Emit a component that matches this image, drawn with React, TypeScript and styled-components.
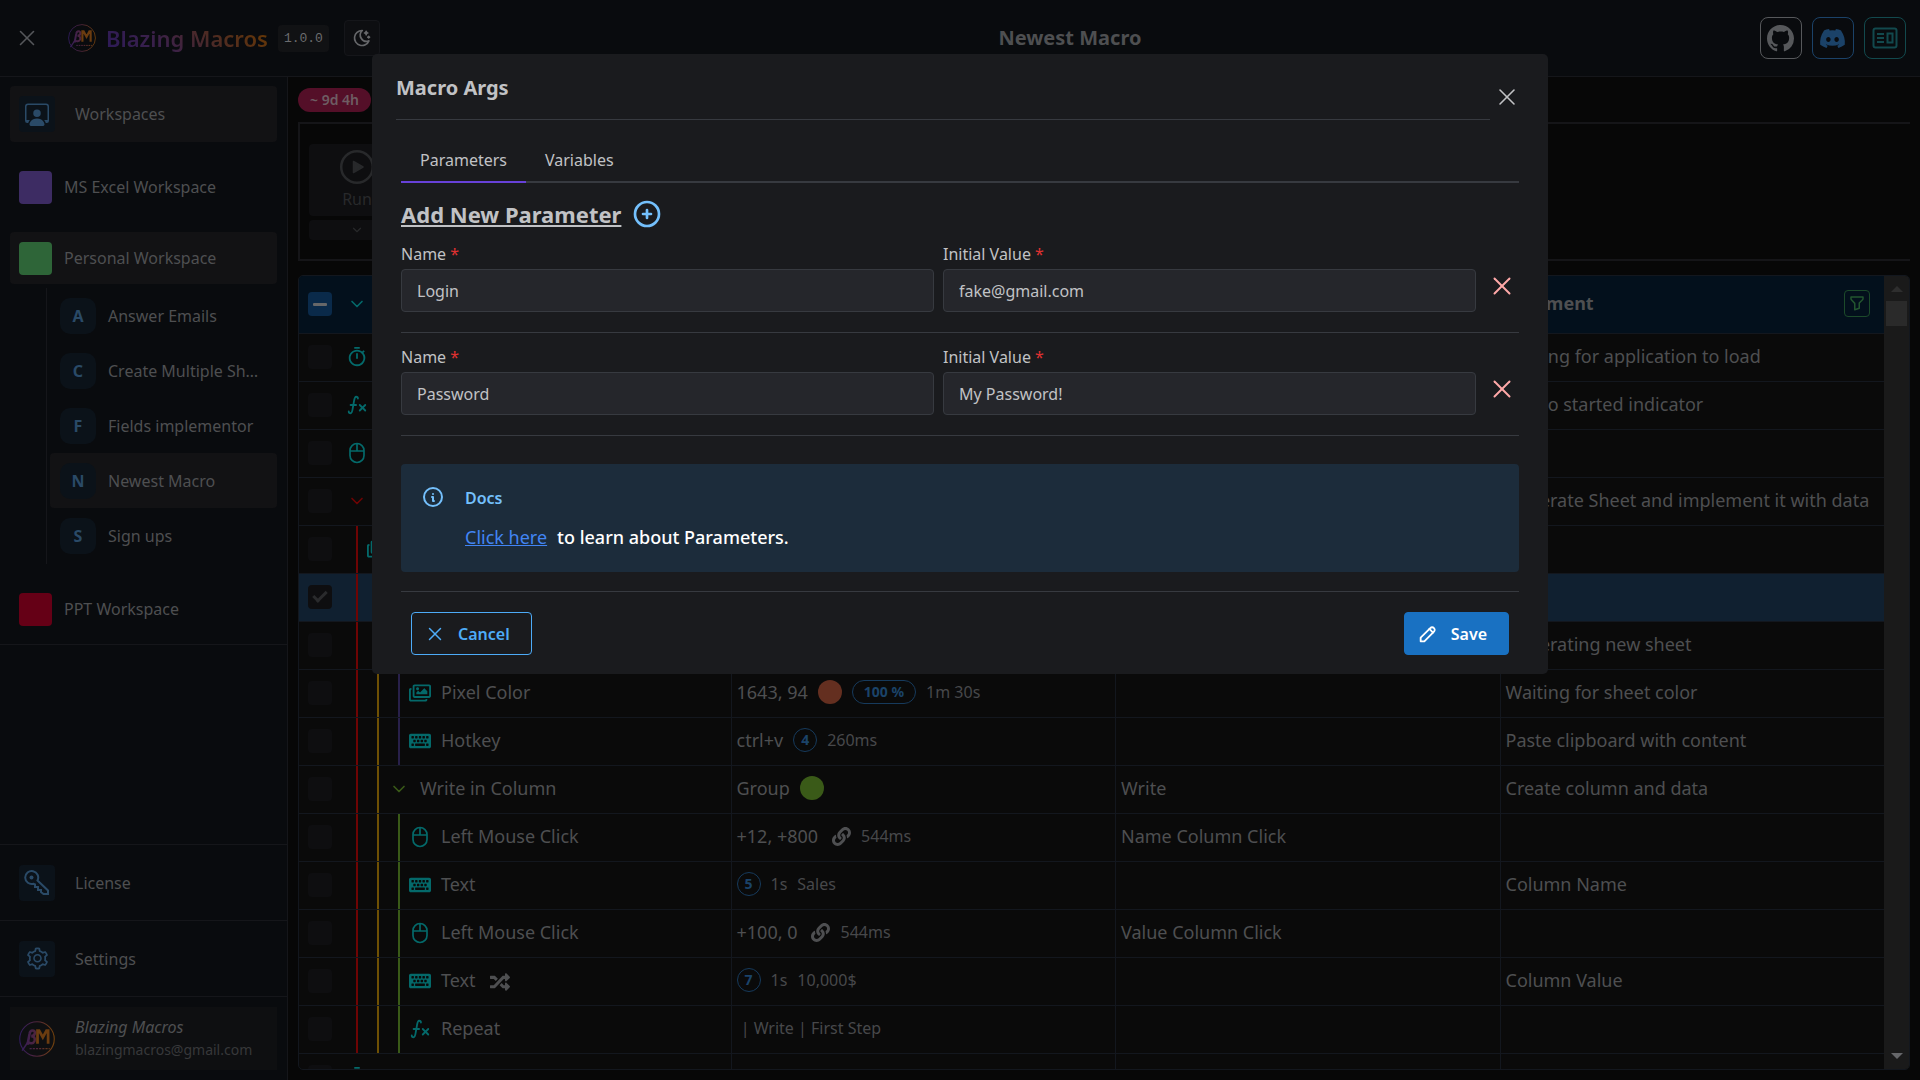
import React from "react";
import styled, { createGlobalStyle, css } from "styled-components";
import {
  BsPersonWorkspace,
  BsGithub,
} from "react-icons/bs";
import { AiOutlineSetting } from "react-icons/ai";
import {
  TbMathFunction,
  TbMoonStars,
  TbFilter,
  TbPencil,
  TbCirclePlus,
  TbInfoCircle,
} from "react-icons/tb";
import { MdOutlineTimer } from "react-icons/md";
import { FaDiscord, FaKeyboard, FaLink, FaRegImages, FaRandom } from "react-icons/fa";
import { X, ChevronDown } from "lucide-react";

const GlobalStyle = createGlobalStyle`
  *, *::before, *::after { box-sizing: border-box; }
  body {
    margin: 0;
    background: #070707;
    color: #4e4f51;
    font-family: "Noto Sans", sans-serif;
    font-size: 16px;
    line-height: 24px;
  }
  button, input { font: inherit; color: inherit; }
  button { cursor: pointer; padding: 0; border: 0; background: none; }
  h1, h2, p, ul { margin: 0; padding: 0; }
  ul { list-style: none; }
  a { color: inherit; text-decoration: none; }
`;

/* ---------- shell ---------- */

const Shell = styled.div`
  display: flex;
  flex-direction: column;
  height: 100vh;
  overflow: hidden;
`;

const Header = styled.header`
  display: flex;
  align-items: center;
  justify-content: space-between;
  height: 77px;
  padding: 0 14px;
  background: #090b0e;
  border-bottom: 1px solid #15161a;
`;

const HeaderLeft = styled.div`
  display: flex;
  align-items: center;
`;

const HeaderRight = styled.div`
  display: flex;
  gap: 10px;
`;

const IconButton = styled.button`
  display: flex;
  align-items: center;
  justify-content: center;
`;

const BurgerClose = styled(IconButton)`
  width: 26px;
  height: 26px;
  margin-right: 28px;
  color: #55575b;
`;

const Brand = styled.span`
  margin: 0 10px;
  font-size: 22px;
  line-height: 30px;
  font-weight: 600;
  background: linear-gradient(45deg, #2c1a5a 0%, #3b2148 35%, #4c2a24 62%, #6b3a00 100%);
  background-clip: text;
  color: transparent;
`;

const Version = styled.code`
  padding: 2px 6px;
  border-radius: 4px;
  background: #111214;
  color: #6b6c6e;
  font-family: "Liberation Mono", monospace;
  font-size: 13px;
  line-height: 23px;
`;

const ThemeToggle = styled(IconButton)`
  width: 36px;
  height: 36px;
  margin-left: 15px;
  border: 1px solid #15161a;
  border-radius: 4px;
  background: #0d0e11;
  color: #66676a;
`;

const PageTitle = styled.h1`
  font-size: 20px;
  line-height: 28px;
  font-weight: 700;
  color: #4e4f51;
`;

const SocialLink = styled.a<{ $color: string }>`
  display: flex;
  align-items: center;
  justify-content: center;
  width: 42px;
  height: 42px;
  border: 1px solid ${(p) => p.$color};
  border-radius: 8px;
  color: ${(p) => p.$color};
`;

const Body = styled.div`
  display: flex;
  flex: 1;
  min-height: 0;
`;

/* ---------- sidebar ---------- */

const Sidebar = styled.aside`
  display: flex;
  flex-direction: column;
  flex: none;
  width: 288px;
  background: #090b0e;
  border-right: 1px solid #15161a;
`;

const WorkspaceNav = styled.nav`
  display: flex;
  flex-direction: column;
  gap: 19px;
  padding: 9px 10px;
  border-bottom: 1px solid #15161a;
`;

const NavItem = styled.a<{ $active?: boolean; $height: number; $gap: number }>`
  display: flex;
  align-items: center;
  gap: ${(p) => p.$gap}px;
  height: ${(p) => p.$height}px;
  padding: 0 9px;
  border-radius: 4px;
  background: ${(p) => (p.$active ? "#121214" : "transparent")};
`;

const IconTile = styled.span<{ $rounded?: boolean }>`
  display: flex;
  align-items: center;
  justify-content: center;
  flex: none;
  width: 36px;
  height: 36px;
  border-radius: ${(p) => (p.$rounded ? 10 : 4)}px;
  background: #0b1219;
  color: #2a4a67;
  font-weight: 700;
`;

const Swatch = styled.span<{ $color: string }>`
  flex: none;
  width: 33px;
  height: 33px;
  border-radius: 4px;
  background: ${(p) => p.$color};
`;

const MacroList = styled.ul`
  margin: 4px 0 0 36px;
  padding: 0 0 1px 3px;
  border-left: 1px solid #15161a;
`;

const MacroItem = styled(NavItem)`
  padding: 0 6px 0 10px;
  white-space: nowrap;
`;

const SidebarFooter = styled.div`
  margin-top: auto;
`;

const FooterRow = styled.div`
  padding: 10px;
  border-top: 1px solid #15161a;
`;

const UserCard = styled.div`
  display: flex;
  align-items: center;
  gap: 20px;
  height: 63px;
  padding: 0 9px;
  background: #0e0f11;
`;

const UserName = styled.div`
  font-style: italic;
  line-height: 23px;
`;

const UserMail = styled.div`
  font-size: 14px;
  line-height: 22px;
  color: #37383a;
`;

/* ---------- main ---------- */

const Main = styled.main`
  display: flex;
  flex-direction: column;
  flex: 1;
  min-width: 0;
  padding: 11px 10px 10px;
`;

const TimeBadge = styled.span`
  align-self: flex-start;
  padding: 0 12px;
  border-radius: 12px;
  background: #540f28;
  color: #6e5d63;
  font-size: 14px;
  line-height: 24px;
  font-weight: 600;
`;

const Toolbar = styled.section`
  height: 139px;
  margin: 10px 0 14px;
  padding: 20px 9px;
  border: 2px solid #151518;
  border-right: 0;
`;

const RunGroup = styled.div`
  display: flex;
  flex-direction: column;
  gap: 4px;
  width: 96px;
  color: #28292b;
`;

const RunButton = styled.button`
  display: flex;
  flex-direction: column;
  align-items: center;
  gap: 2px;
  height: 72px;
  padding-top: 5px;
  border-radius: 4px;
  background: #0e0e10;
`;

const RunMenu = styled(IconButton)`
  height: 20px;
  border-radius: 4px;
  background: #0e0e10;
`;

const TableFrame = styled.section`
  display: flex;
  flex: 1;
  min-height: 0;
  overflow: hidden;
  border: 1px solid #13171e;
  border-radius: 5px;
  background: #0a0a0a;
`;

const TableScroll = styled.div`
  flex: 1;
  min-width: 0;
  overflow: hidden;
`;

const Table = styled.table`
  width: 100%;
  table-layout: fixed;
  border-collapse: separate;
  border-spacing: 0;
  font-size: 18px;
`;

const CheckCol = styled.col`
  width: 47px;
`;

const Row = styled.tr<{ $selected?: boolean }>`
  height: 48px;
  background: ${(p) => (p.$selected ? "#102030" : "transparent")};
`;

const HeadRow = styled.tr`
  height: 58px;
  background: #03101c;
`;

const cellBase = css`
  padding: 0 0 3px 5px;
  border-bottom: 1px solid #13171e;
  text-align: left;
  white-space: nowrap;
  overflow: hidden;
`;

const HeadCell = styled.th`
  ${cellBase}
  padding-left: 6px;
  font-weight: 700;
`;

const Cell = styled.td`
  ${cellBase}
  border-left: 1px solid #13171e;
`;

const CheckCell = styled.td`
  ${cellBase}
  padding: 0 0 1px 9px;
`;

const NameCell = styled.td`
  ${cellBase}
  padding: 0;
`;

const Checkbox = styled.input<{ $tone?: string; $mark?: "dash" | "tick" }>`
  appearance: none;
  display: flex;
  align-items: center;
  justify-content: center;
  width: 24px;
  height: 24px;
  margin: 0;
  border-radius: 4px;
  background: ${(p) => p.$tone || "#0e0e10"};

  ${(p) =>
    p.$mark === "dash" &&
    css`
      &::before {
        content: "";
        width: 14px;
        height: 3px;
        border-radius: 1px;
        background: #666769;
      }
    `}
  ${(p) =>
    p.$mark === "tick" &&
    css`
      &::before {
        content: "";
        width: 14px;
        height: 8px;
        margin-bottom: 4px;
        border: solid #2a2b2d;
        border-width: 0 0 3px 3px;
        transform: rotate(-45deg);
      }
    `}
`;

const NameLine = styled.div`
  display: flex;
  align-items: center;
  height: 47px;
`;

const NameText = styled.span`
  padding-bottom: 3px;
`;

const Guide = styled.span<{ $color: string }>`
  display: flex;
  justify-content: center;
  align-self: stretch;
  flex: none;
  width: 21px;

  &::before {
    content: "";
    width: 2px;
    background: ${(p) => p.$color};
  }
`;

const Glyph = styled.span<{ $color?: string }>`
  display: flex;
  align-items: center;
  justify-content: center;
  flex: none;
  width: 22px;
  margin-right: 10px;
  padding-bottom: 2px;
  color: ${(p) => p.$color || "#04696a"};
`;

const Trailing = styled.span`
  display: flex;
  margin-left: 14px;
`;

const Values = styled.div`
  display: flex;
  align-items: center;
  gap: 10px;
`;

const Small = styled.span`
  font-size: 16px;
  color: #47484a;
`;

const Dot = styled.span<{ $color: string }>`
  width: 24px;
  height: 24px;
  border-radius: 50%;
  background: ${(p) => p.$color};
`;

const Pill = styled.span`
  min-width: 24px;
  padding: 0 11px;
  border: 1px solid #163a5c;
  border-radius: 12px;
  color: #1b4369;
  font-size: 14px;
  line-height: 22px;
  font-weight: 700;
  text-align: center;
`;

const CountPill = styled(Pill)`
  width: 24px;
  padding: 0;
`;

const LinkIcon = styled.span`
  display: flex;
  margin-left: 4px;
`;

const HeadLine = styled.div`
  display: flex;
  align-items: center;
  justify-content: space-between;
  padding-right: 14px;
`;

const FilterButton = styled(IconButton)`
  width: 26px;
  height: 27px;
  border: 1px solid #1c4a2a;
  border-radius: 4px;
  color: #23552f;
`;

const ScrollTrack = styled.div`
  display: flex;
  flex-direction: column;
  align-items: center;
  flex: none;
  width: 25px;
  padding: 10px 0;
  background: #1a1a1a;
`;

const ScrollArrow = styled.span<{ $down?: boolean }>`
  border: 6px solid transparent;
  ${(p) =>
    p.$down
      ? css`
          margin-top: auto;
          border-bottom: 0;
          border-top-color: #66676a;
        `
      : css`
          border-top: 0;
          border-bottom-color: #2e2e2e;
        `}
`;

const ScrollThumb = styled.span`
  width: 21px;
  height: 25px;
  margin-top: 9px;
  background: #2a2a2a;
`;

/* ---------- modal ---------- */

const Overlay = styled.div`
  position: fixed;
  inset: 0;
  display: flex;
  align-items: flex-start;
  justify-content: center;
  padding-top: 5vh;
`;

const Modal = styled.section`
  width: 90%;
  max-width: 1176px;
  border-radius: 5px;
  padding: 19px 24px;
  background: #1a1b1e;
  color: #c1c2c5;
`;

const ModalHeader = styled.header`
  display: flex;
  align-items: center;
`;

const ModalTitle = styled.h2`
  flex: 1;
  padding: 1px 0 17px;
  border-bottom: 1px solid #373a40;
  font-size: 20px;
  line-height: 28px;
  font-weight: 700;
`;

const ModalClose = styled(IconButton)`
  width: 34px;
  height: 34px;
`;

const ModalBody = styled.div`
  padding: 17px 5px 0;
`;

const TabList = styled.div`
  display: flex;
  border-bottom: 2px solid #373a40;
`;

const Tab = styled.button<{ $active?: boolean }>`
  height: 46px;
  margin-bottom: -2px;
  padding: 2px 19px 0;
  border-bottom: 2px solid ${(p) => (p.$active ? "#6741d9" : "transparent")};
`;

const AddRow = styled.div`
  display: flex;
  align-items: center;
  gap: 10px;
  margin-top: 15px;
  color: #74c0fc;
`;

const AddTitle = styled.h2`
  color: #c1c2c5;
  font-size: 22px;
  line-height: 32px;
  font-weight: 700;
  text-decoration: underline;
  text-decoration-thickness: 2px;
  text-underline-offset: 2px;
`;

const ParamRow = styled.div`
  display: flex;
  align-items: flex-end;
  gap: 9px;
  padding: 12px 0 20px;
  border-bottom: 1px solid #373a40;
`;

const Field = styled.label`
  display: flex;
  flex-direction: column;
  gap: 3px;
  flex: 1;
  line-height: 24px;
`;

const Required = styled.span`
  color: #e03131;
`;

const TextInput = styled.input`
  width: 100%;
  height: 43px;
  padding: 0 15px;
  border: 1px solid #373a40;
  border-radius: 4px;
  background: #25262b;
  outline: none;
`;

const RemoveButton = styled(IconButton)`
  width: 34px;
  height: 34px;
  margin-bottom: 9px;
  color: #ffa8a8;
`;

const Docs = styled.aside`
  display: flex;
  align-items: flex-start;
  gap: 20px;
  margin-top: 28px;
  padding: 21px 20px;
  border-radius: 4px;
  background: #1c2c3b;
  color: #74c0fc;
`;

const DocsTitle = styled.div`
  font-weight: 600;
  line-height: 26px;
`;

const DocsText = styled.p`
  margin-top: 12px;
  color: #ffffff;
  font-size: 18px;
  line-height: 28px;
  font-weight: 500;
`;

const DocsLink = styled.a`
  margin-right: 10px;
  color: #4285f4;
  font-weight: 400;
  text-decoration: underline;
`;

const Actions = styled.footer`
  display: flex;
  justify-content: space-between;
  margin-top: 19px;
  padding: 20px 10px 0;
  border-top: 1px solid #373a40;
`;

const ActionButton = styled.button<{ $primary?: boolean }>`
  display: flex;
  align-items: center;
  gap: 12px;
  height: 43px;
  padding: 0 21px 0 12px;
  border: 1px solid ${(p) => (p.$primary ? "#1971c2" : "#4dabf7")};
  border-radius: 4px;
  background: ${(p) => (p.$primary ? "#1971c2" : "transparent")};
  color: ${(p) => (p.$primary ? "#ffffff" : "#4dabf7")};
  font-weight: 600;
`;

/* ---------- drawings ---------- */

const Logo = ({ size, id }: { size: number; id: string }) => (
  <svg width={size} height={size} viewBox="0 0 34 34" fill="none" aria-hidden="true">
    <defs>
      <linearGradient id={id} gradientUnits="userSpaceOnUse" x1="0" y1="0" x2="34" y2="0">
        <stop offset="0" stopColor="#2f1b60" />
        <stop offset="0.5" stopColor="#51263a" />
        <stop offset="1" stopColor="#75430a" />
      </linearGradient>
    </defs>
    <circle cx="17" cy="17" r="16.300" stroke={`url(#${id})`} strokeWidth="1" />
    <path d="M3 28 L9 19" stroke={`url(#${id})`} strokeWidth="1.500" />
    <path
      d="M8 22.500 L10 12 C10.500 8 15.500 8 15 11.500 C14.800 13.500 13 14.300 11.500 14.300 C14.500 14.300 15.500 16.500 14.600 19 C13.600 21.500 10.500 21.500 8.800 20"
      stroke={`url(#${id})`}
      strokeWidth="2.400"
    />
    <path d="M17.500 21.500 V9 H19 L22.500 15.500 L26 9 H27.500 V21.500" stroke="#6b3c10" strokeWidth="2.600" />
    <path d="M10 26 H29" stroke={`url(#${id})`} strokeWidth="1.200" strokeDasharray="2 1" />
  </svg>
);

const KeyIcon = () => (
  <svg width="26" height="26" viewBox="0 0 26 26" fill="none" stroke="currentColor" strokeWidth="2" aria-hidden="true">
    <circle cx="7.500" cy="7.500" r="2" fill="currentColor" stroke="none" />
    <path d="M13.500 10.500 A6.500 6.500 0 1 0 9.500 13.800 L11 14.500 V17 H14 V20 H17 V22 L19.500 24 H24 V20.500 Z" />
  </svg>
);

const MouseIcon = () => (
  <svg width="20" height="22" viewBox="0 0 20 22" fill="none" stroke="currentColor" strokeWidth="1.700" aria-hidden="true">
    <rect x="3" y="1.500" width="14" height="19" rx="7" />
    <path d="M3 9 H17 M10 1.500 V9" />
  </svg>
);

const PlayIcon = () => (
  <svg width="36" height="36" viewBox="0 0 36 36" fill="none" stroke="currentColor" strokeWidth="2.500" aria-hidden="true">
    <circle cx="18" cy="18" r="15.800" />
    <path d="M14.500 12.500 L24 18 L14.500 23.500 Z" fill="currentColor" strokeWidth="1.500" strokeLinejoin="round" />
  </svg>
);

const NewsIcon = () => (
  <svg width="26" height="22" viewBox="0 0 26 22" fill="none" stroke="currentColor" strokeWidth="2" aria-hidden="true">
    <rect x="1.500" y="1.500" width="23" height="19" rx="2" />
    <path d="M5 7 H12 M5 11 H12 M5 15 H12" />
    <rect x="15.500" y="6.500" width="5" height="9" />
  </svg>
);

/* ---------- data ---------- */

const RED = "#6e0404";
const YELLOW = "#6e5004";
const PURPLE = "#28204a";
const GREEN = "#3a5a18";

type Icon = "timer" | "fx" | "mouse" | "images" | "keys" | "open";

type MacroStep = {
  icon: Icon;
  tone?: string;
  guides?: string[];
  name?: string;
  shuffled?: boolean;
  selected?: boolean;
  values?: React.ReactNode;
  label?: string;
  comment?: string;
};

const inWrite = [RED, YELLOW, GREEN];

const steps: MacroStep[] = [
  { icon: "timer", comment: "Waiting for application to load" },
  { icon: "fx", comment: "Macro started indicator" },
  { icon: "mouse" },
  { icon: "open", tone: RED, comment: "Generate Sheet and implement it with data" },
  { icon: "images", guides: [RED] },
  { icon: "open", tone: YELLOW, guides: [RED], selected: true },
  { icon: "open", tone: PURPLE, guides: [RED, YELLOW], comment: "Generating new sheet" },
  {
    icon: "images",
    guides: [RED, YELLOW, PURPLE],
    name: "Pixel Color",
    values: (
      <>
        1643, 94 <Dot $color="#642f20" />
        <Pill>100 %</Pill>
        <Small>1m 30s</Small>
      </>
    ),
    comment: "Waiting for sheet color",
  },
  {
    icon: "keys",
    guides: [RED, YELLOW, PURPLE],
    name: "Hotkey",
    values: (
      <>
        ctrl+v <CountPill>4</CountPill>
        <Small>260ms</Small>
      </>
    ),
    comment: "Paste clipboard with content",
  },
  {
    icon: "open",
    tone: GREEN,
    guides: [RED, YELLOW],
    name: "Write in Column",
    values: (
      <>
        Group <Dot $color={GREEN} />
      </>
    ),
    label: "Write",
    comment: "Create column and data",
  },
  {
    icon: "mouse",
    guides: inWrite,
    name: "Left Mouse Click",
    values: (
      <>
        +12, +800
        <LinkIcon><FaLink size={19} /></LinkIcon>
        <Small>544ms</Small>
      </>
    ),
    label: "Name Column Click",
  },
  {
    icon: "keys",
    guides: inWrite,
    name: "Text",
    values: (
      <>
        <CountPill>5</CountPill>
        <Small>1s</Small>
        <Small>Sales</Small>
      </>
    ),
    comment: "Column Name",
  },
  {
    icon: "mouse",
    guides: inWrite,
    name: "Left Mouse Click",
    values: (
      <>
        +100, 0
        <LinkIcon><FaLink size={19} /></LinkIcon>
        <Small>544ms</Small>
      </>
    ),
    label: "Value Column Click",
  },
  {
    icon: "keys",
    guides: inWrite,
    name: "Text",
    shuffled: true,
    values: (
      <>
        <CountPill>7</CountPill>
        <Small>1s</Small>
        <Small>10,000$</Small>
      </>
    ),
    comment: "Column Value",
  },
  {
    icon: "fx",
    guides: inWrite,
    name: "Repeat",
    values: <Small>&nbsp;| Write | First Step</Small>,
  },
  { icon: "timer" },
];

const StepIcon = ({ icon }: { icon: Icon }) => {
  switch (icon) {
    case "timer":
      return <MdOutlineTimer size={22} />;
    case "fx":
      return <TbMathFunction size={22} />;
    case "mouse":
      return <MouseIcon />;
    case "images":
      return <FaRegImages size={22} />;
    case "keys":
      return <FaKeyboard size={22} />;
    default:
      return <ChevronDown size={20} />;
  }
};

const macros = [
  "Answer Emails",
  "Create Multiple Sh…",
  "Fields implementor",
  "Newest Macro",
  "Sign ups",
];

const parameters = [
  { name: "Login", value: "fake@gmail.com" },
  { name: "Password", value: "My Password!" },
];

/* ---------- page ---------- */

export default function App() {
  return (
    <>
      <GlobalStyle />
      <Shell>
        <Header>
          <HeaderLeft>
            <BurgerClose aria-label="Toggle navigation">
              <X size={28} strokeWidth={1.5} />
            </BurgerClose>
            <Logo size={28} id="brand-logo" />
            <Brand>Blazing Macros</Brand>
            <Version>1.0.0</Version>
            <ThemeToggle aria-label="Toggle color scheme">
              <TbMoonStars size={20} />
            </ThemeToggle>
          </HeaderLeft>
          <PageTitle>Newest Macro</PageTitle>
          <HeaderRight>
            <SocialLink href="#github" aria-label="GitHub" $color="#56585b"><BsGithub size={27} /></SocialLink>
            <SocialLink href="#discord" aria-label="Discord" $color="#1b4268"><FaDiscord size={27} /></SocialLink>
            <SocialLink href="#news" aria-label="News" $color="#12494d"><NewsIcon /></SocialLink>
          </HeaderRight>
        </Header>

        <Body>
          <Sidebar>
            <WorkspaceNav>
              <NavItem href="#workspaces" $height={56} $gap={20} $active>
                <IconTile><BsPersonWorkspace size={24} /></IconTile>
                Workspaces
              </NavItem>
              <NavItem href="#excel" $height={52} $gap={12}>
                <Swatch $color="#3d2c63" />
                MS Excel Workspace
              </NavItem>
              <div>
                <NavItem href="#personal" $height={52} $gap={12} $active>
                  <Swatch $color="#2e6538" />
                  Personal Workspace
                </NavItem>
                <MacroList>
                  {macros.map((macro) => (
                    <li key={macro}>
                      <MacroItem href="#macro" $height={55} $gap={12} $active={macro === "Newest Macro"}>
                        <IconTile $rounded>{macro[0]}</IconTile>
                        {macro}
                      </MacroItem>
                    </li>
                  ))}
                </MacroList>
              </div>
              <NavItem href="#ppt" $height={52} $gap={12}>
                <Swatch $color="#650016" />
                PPT Workspace
              </NavItem>
            </WorkspaceNav>

            <SidebarFooter>
              <FooterRow>
                <NavItem href="#license" $height={55} $gap={20}>
                  <IconTile><KeyIcon /></IconTile>
                  License
                </NavItem>
              </FooterRow>
              <FooterRow>
                <NavItem href="#settings" $height={55} $gap={20}>
                  <IconTile><AiOutlineSetting size={25} /></IconTile>
                  Settings
                </NavItem>
              </FooterRow>
              <FooterRow>
                <UserCard>
                  <Logo size={36} id="user-logo" />
                  <div>
                    <UserName>Blazing Macros</UserName>
                    <UserMail>blazingmacros@gmail.com</UserMail>
                  </div>
                </UserCard>
              </FooterRow>
            </SidebarFooter>
          </Sidebar>

          <Main>
            <TimeBadge>~ 9d 4h</TimeBadge>
            <Toolbar>
              <RunGroup>
                <RunButton>
                  <PlayIcon />
                  Run
                </RunButton>
                <RunMenu aria-label="Run options"><ChevronDown size={14} /></RunMenu>
              </RunGroup>
            </Toolbar>

            <TableFrame>
              <TableScroll>
                <Table>
                  <colgroup>
                    <CheckCol />
                    <col />
                    <col />
                    <col />
                    <col />
                  </colgroup>
                  <thead>
                    <HeadRow>
                      <CheckCell>
                        <Checkbox type="checkbox" aria-label="Select all" $tone="#0a2a4a" $mark="dash" />
                      </CheckCell>
                      <NameCell>
                        <NameLine>
                          <Glyph><ChevronDown size={20} /></Glyph>
                        </NameLine>
                      </NameCell>
                      <HeadCell />
                      <HeadCell />
                      <HeadCell>
                        <HeadLine>
                          Comment
                          <FilterButton aria-label="Filter"><TbFilter size={18} /></FilterButton>
                        </HeadLine>
                      </HeadCell>
                    </HeadRow>
                  </thead>
                  <tbody>
                    {steps.map((step, index) => (
                      <Row key={index} $selected={step.selected}>
                        <CheckCell>
                          <Checkbox
                            type="checkbox"
                            aria-label={`Select step ${index + 1}`}
                            defaultChecked={step.selected}
                            $mark={step.selected ? "tick" : undefined}
                          />
                        </CheckCell>
                        <NameCell>
                          <NameLine>
                            {step.guides?.map((color) => <Guide key={color} $color={color} />)}
                            <Glyph $color={step.tone}><StepIcon icon={step.icon} /></Glyph>
                            <NameText>{step.name}</NameText>
                            {step.shuffled && <Trailing><FaRandom size={20} /></Trailing>}
                          </NameLine>
                        </NameCell>
                        <Cell><Values>{step.values}</Values></Cell>
                        <Cell>{step.label}</Cell>
                        <Cell>{step.comment}</Cell>
                      </Row>
                    ))}
                  </tbody>
                </Table>
              </TableScroll>
              <ScrollTrack>
                <ScrollArrow />
                <ScrollThumb />
                <ScrollArrow $down />
              </ScrollTrack>
            </TableFrame>
          </Main>
        </Body>
      </Shell>

      <Overlay>
        <Modal role="dialog" aria-modal="true" aria-labelledby="args-title">
          <ModalHeader>
            <ModalTitle id="args-title">Macro Args</ModalTitle>
            <ModalClose aria-label="Close"><X size={28} strokeWidth={1.3} /></ModalClose>
          </ModalHeader>
          <ModalBody>
            <TabList role="tablist">
              <Tab role="tab" aria-selected="true" $active>Parameters</Tab>
              <Tab role="tab" aria-selected="false">Variables</Tab>
            </TabList>
            <AddRow>
              <AddTitle>Add New Parameter</AddTitle>
              <IconButton aria-label="Add parameter"><TbCirclePlus size={32} /></IconButton>
            </AddRow>
            {parameters.map((parameter) => (
              <ParamRow key={parameter.name}>
                <Field>
                  <span>Name <Required>*</Required></span>
                  <TextInput defaultValue={parameter.name} />
                </Field>
                <Field>
                  <span>Initial Value <Required>*</Required></span>
                  <TextInput defaultValue={parameter.value} />
                </Field>
                <RemoveButton aria-label={`Remove ${parameter.name}`}><X size={30} strokeWidth={1.6} /></RemoveButton>
              </ParamRow>
            ))}
            <Docs>
              <TbInfoCircle size={24} />
              <div>
                <DocsTitle>Docs</DocsTitle>
                <DocsText>
                  <DocsLink href="#docs">Click here</DocsLink>
                  to learn about Parameters.
                </DocsText>
              </div>
            </Docs>
            <Actions>
              <ActionButton><X size={22} strokeWidth={1.6} />Cancel</ActionButton>
              <ActionButton $primary><TbPencil size={22} />Save</ActionButton>
            </Actions>
          </ModalBody>
        </Modal>
      </Overlay>
    </>
  );
}
